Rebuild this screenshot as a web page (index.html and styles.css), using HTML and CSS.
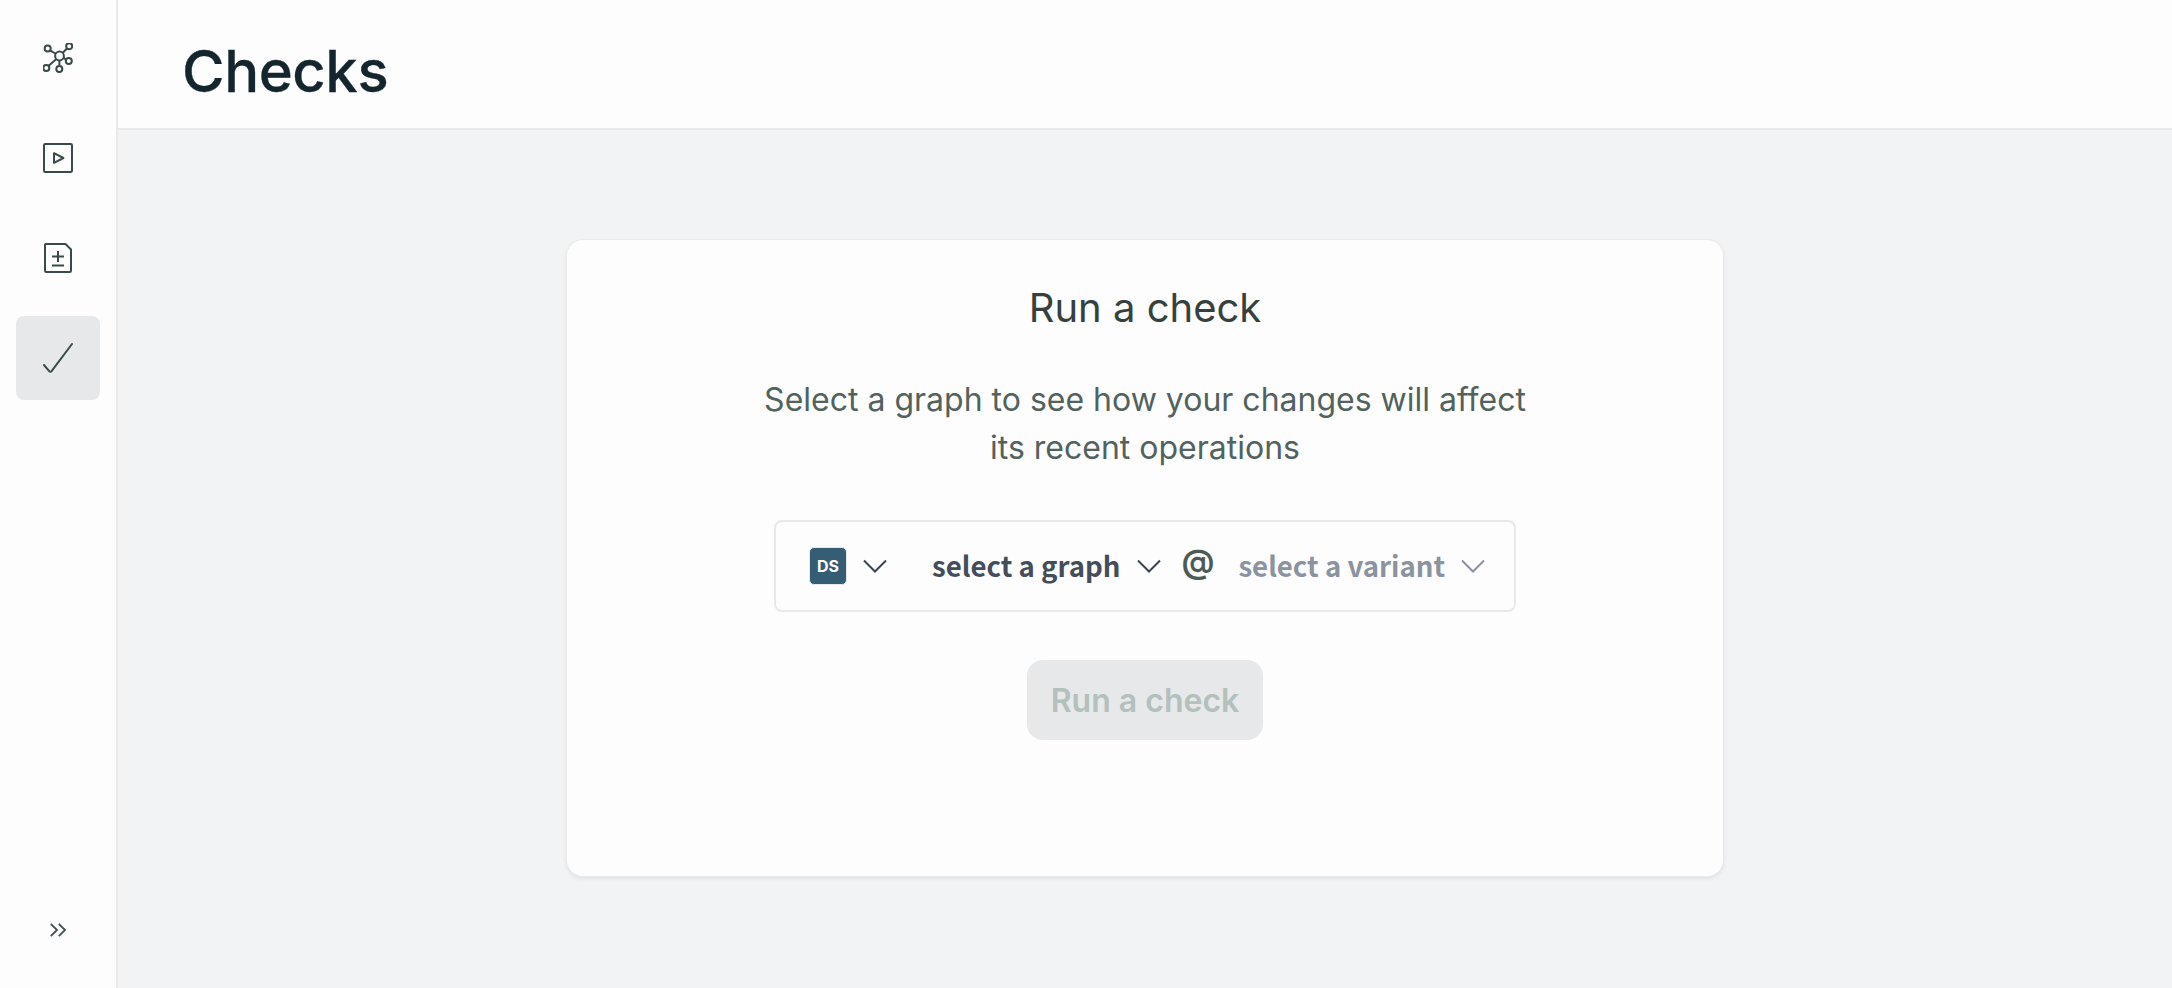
FILE: index.html
```html
<!DOCTYPE html>
<html lang="en">
<head>
<meta charset="utf-8">
<title>Checks</title>
<link rel="stylesheet" href="styles.css">
</head>
<body>
<div class="app">
  <nav class="sidebar">
    <div class="nav-top">
      <a class="nav-item">
        <svg class="icon" viewBox="0 0 30 30" fill="none">
          <circle cx="16.5" cy="13" r="4.4"/><circle cx="4.7" cy="5.5" r="3"/><circle cx="26.2" cy="3.2" r="3"/><circle cx="25.8" cy="18" r="3"/><circle cx="16.3" cy="26" r="3"/><circle cx="3.3" cy="25" r="3"/>
          <path d="M7 7.3 13.2 11M24.2 5.2 19.6 10M20.5 14.4 23.2 16.9M16.4 17.2V23.2M13.4 16 5.4 23"/>
        </svg>
      </a>
      <a class="nav-item">
        <svg class="icon" viewBox="0 0 30 30" fill="none">
          <rect x="1" y="1" width="28" height="28" rx="1.2"/>
          <path d="M11 10.2 20.4 15 11 19.8Z" stroke-linejoin="round"/>
        </svg>
      </a>
      <a class="nav-item">
        <svg class="icon" viewBox="0 0 30 30" fill="none">
          <path d="M2.8 1H22.5L28 6.5V27.8A1.2 1.2 0 0 1 26.8 29H3.2A1.2 1.2 0 0 1 2 27.8V1.8A.8.8 0 0 1 2.8 1Z" stroke-linejoin="round"/>
          <path d="M15 8V19M9 13.5H21M9 22.5H21"/>
        </svg>
      </a>
      <a class="nav-item nav-item-active">
        <svg class="icon" viewBox="0 0 30 30" fill="none">
          <path d="M1 22 6.2 28.2A1.6 1.6 0 0 0 8.6 28.2L29 1" stroke-linecap="round" stroke-linejoin="round"/>
        </svg>
      </a>
    </div>
    <a class="expand">
      <svg class="expand-icon" viewBox="0 0 16 14" fill="none">
        <path d="M.8 .8 7 7 .8 13.2M8.8 .8 15 7 8.8 13.2"/>
      </svg>
    </a>
  </nav>
  <div class="main">
    <header class="page-header">
      <h1 class="page-title">Checks</h1>
    </header>
    <main class="content">
      <section class="card">
        <h2 class="card-title">Run a check</h2>
        <p class="card-text">Select a graph to see how your changes will affect<br>its recent operations</p>
        <div class="selector">
          <div class="org-select">
            <span class="org-badge">DS</span>
            <svg class="chev chev-dark" viewBox="0 0 24 14" fill="none"><path d="M1 1.5 12 12.5 23 1.5"/></svg>
          </div>
          <div class="graph-select">
            <span class="graph-label">select a graph</span>
            <svg class="chev chev-dark" viewBox="0 0 24 14" fill="none"><path d="M1 1.5 12 12.5 23 1.5"/></svg>
          </div>
          <span class="at">@</span>
          <div class="variant-select">
            <span class="variant-label">select a variant</span>
            <svg class="chev chev-light" viewBox="0 0 24 14" fill="none"><path d="M1 1.5 12 12.5 23 1.5"/></svg>
          </div>
        </div>
        <button class="run-button" disabled>Run a check</button>
      </section>
    </main>
  </div>
</div>
</body>
</html>
```
FILE: styles.css
```css
* { box-sizing: border-box; }
html, body { margin: 0; height: 100%; }
body { font-family: Inter, "Liberation Sans", sans-serif; background: #f1f3f4; color: #14252e; }
.app { display: flex; height: 988px; overflow: hidden; }
.sidebar {
  width: 118px; flex: none; background: #fdfdfd; border-right: 2px solid #e7e9ea;
  display: flex; flex-direction: column; justify-content: space-between;
  align-items: center; padding: 16px 0 16px;
}
.nav-top { display: flex; flex-direction: column; gap: 16px; }
.nav-item { width: 84px; height: 84px; border-radius: 8px; display: flex; align-items: center; justify-content: center; }
.nav-item-active { background: #e6e8e9; }
.icon { width: 30px; height: 30px; stroke: #3a4a4a; stroke-width: 2; }
.expand { height: 84px; display: flex; align-items: center; justify-content: center; }
.expand-icon { width: 16px; height: 14px; stroke: #3f4f4f; stroke-width: 1.8; }
.main { flex: 1; display: flex; flex-direction: column; min-width: 0; }
.page-header { height: 130px; flex: none; background: #fdfdfd; border-bottom: 2px solid #e7e9ea; padding: 14px 65px 0 64px; display: flex; align-items: center; }
.page-title { margin: 0; font-size: 58px; font-weight: 500; color: #14252e; letter-spacing: -.4px; line-height: 1; -webkit-text-stroke: .3px #14252e; }
.content { flex: 1; display: flex; justify-content: center; padding-top: 110px; }
.card {
  width: 1156px; height: 636px; background: #fdfdfd; border-radius: 16px;
  box-shadow: 0 0 0 1px #e9ebec, 0 2px 5px rgba(20, 37, 46, .1);
  display: flex; flex-direction: column; align-items: center; padding-top: 44px;
}
.card-title { margin: 0; font-size: 40px; font-weight: 400; line-height: 48px; color: #36413e; }
.card-text { margin: 44px 0 0; font-size: 32px; line-height: 48px; color: #52625d; text-align: center; }
.selector {
  margin-top: 48px; width: 742px; height: 92px; border: 2px solid #e7e9ea; border-radius: 8px;
  display: flex; align-items: center; padding: 0 26px 0 33px;
  font-family: "Noto Sans CJK JP", "Open Sans", sans-serif; font-size: 27.6px;
}
.org-select { display: flex; align-items: center; gap: 16px; width: 123px; flex: none; }
.org-badge {
  width: 38px; height: 38px; border-radius: 5px; background: #355e75; border: 1px solid #e7e9ea; color: #fff;
  font-family: Inter, sans-serif; font-size: 16px; font-weight: 700; display: flex; align-items: center; justify-content: center;
}
.chev { width: 24px; height: 14px; stroke-width: 2; flex: none; }
.chev-dark { stroke: #3b4452; }
.chev-light { stroke: #89929d; }
.graph-select { display: flex; align-items: center; gap: 17px; flex: none; }
.graph-label { font-weight: 700; color: #444d5a; margin-top: -2px; }
.at { font-family: Inter, sans-serif; font-size: 33px; font-weight: 600; color: #4b5c57; margin: -10px 24px 0 20px; flex: none; }
.variant-select { display: flex; align-items: center; gap: 16px; flex: none; }
.variant-label { font-weight: 700; color: #8a939e; margin-top: -2px; }
.run-button {
  margin-top: 48px; width: 236px; height: 80px; border: 0; border-radius: 16px; background: #e6e8e9;
  color: #b3c0bd; font-family: Inter, sans-serif; font-size: 32px; font-weight: 600; padding: 0;
}
```
